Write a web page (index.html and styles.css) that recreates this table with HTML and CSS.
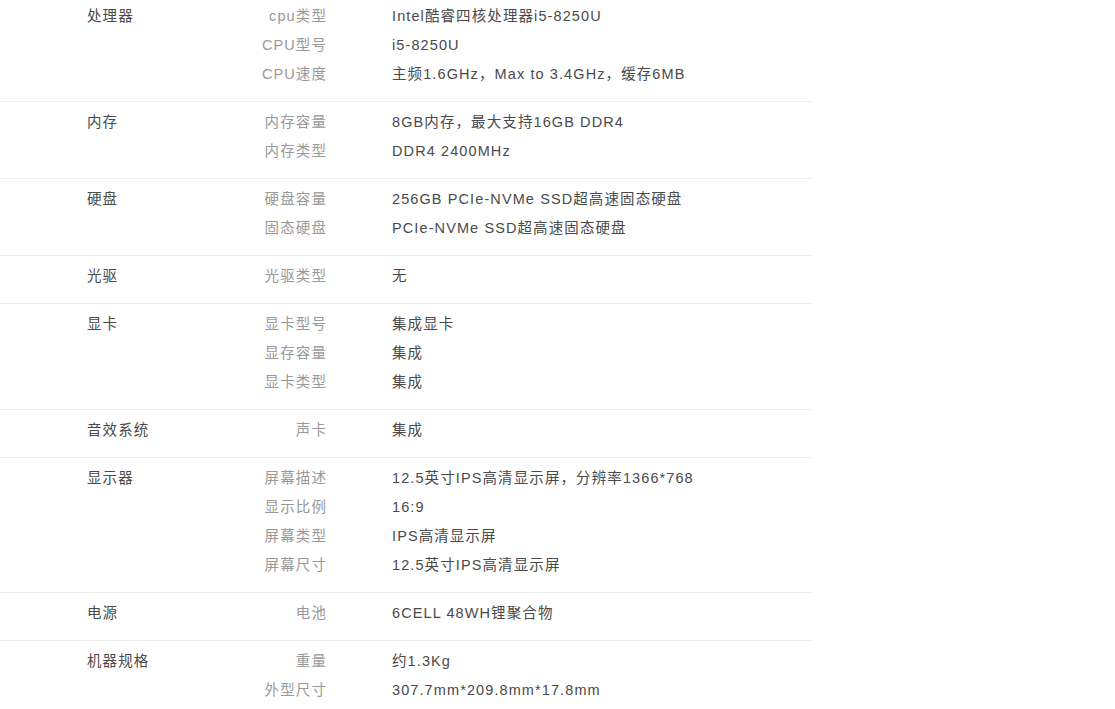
FILE: index.html
```html
<!DOCTYPE html>
<html lang="zh-CN">
<head>
<meta charset="utf-8">
<title>规格参数</title>
<link rel="stylesheet" href="styles.css">
</head>
<body>
<div class="specs">
  <section class="group">
    <div class="cat">处理器</div>
    <div class="items">
      <div class="row"><span class="label">cpu类型</span><span class="value">Intel酷睿四核处理器i5-8250U</span></div>
      <div class="row"><span class="label">CPU型号</span><span class="value">i5-8250U</span></div>
      <div class="row"><span class="label">CPU速度</span><span class="value">主频1.6GHz，Max to 3.4GHz，缓存6MB</span></div>
    </div>
  </section>
  <section class="group">
    <div class="cat">内存</div>
    <div class="items">
      <div class="row"><span class="label">内存容量</span><span class="value">8GB内存，最大支持16GB DDR4</span></div>
      <div class="row"><span class="label">内存类型</span><span class="value">DDR4 2400MHz</span></div>
    </div>
  </section>
  <section class="group">
    <div class="cat">硬盘</div>
    <div class="items">
      <div class="row"><span class="label">硬盘容量</span><span class="value">256GB PCIe-NVMe SSD超高速固态硬盘</span></div>
      <div class="row"><span class="label">固态硬盘</span><span class="value">PCIe-NVMe SSD超高速固态硬盘</span></div>
    </div>
  </section>
  <section class="group">
    <div class="cat">光驱</div>
    <div class="items">
      <div class="row"><span class="label">光驱类型</span><span class="value">无</span></div>
    </div>
  </section>
  <section class="group">
    <div class="cat">显卡</div>
    <div class="items">
      <div class="row"><span class="label">显卡型号</span><span class="value">集成显卡</span></div>
      <div class="row"><span class="label">显存容量</span><span class="value">集成</span></div>
      <div class="row"><span class="label">显卡类型</span><span class="value">集成</span></div>
    </div>
  </section>
  <section class="group">
    <div class="cat">音效系统</div>
    <div class="items">
      <div class="row"><span class="label">声卡</span><span class="value">集成</span></div>
    </div>
  </section>
  <section class="group">
    <div class="cat">显示器</div>
    <div class="items">
      <div class="row"><span class="label">屏幕描述</span><span class="value">12.5英寸IPS高清显示屏，分辨率1366*768</span></div>
      <div class="row"><span class="label">显示比例</span><span class="value">16:9</span></div>
      <div class="row"><span class="label">屏幕类型</span><span class="value">IPS高清显示屏</span></div>
      <div class="row"><span class="label">屏幕尺寸</span><span class="value">12.5英寸IPS高清显示屏</span></div>
    </div>
  </section>
  <section class="group">
    <div class="cat">电源</div>
    <div class="items">
      <div class="row"><span class="label">电池</span><span class="value">6CELL 48WH锂聚合物</span></div>
    </div>
  </section>
  <section class="group">
    <div class="cat">机器规格</div>
    <div class="items">
      <div class="row"><span class="label">重量</span><span class="value">约1.3Kg</span></div>
      <div class="row"><span class="label">外型尺寸</span><span class="value">307.7mm*209.8mm*17.8mm</span></div>
    </div>
  </section>
</div>
</body>
</html>
```
FILE: styles.css
```css
html, body {
  margin: 0;
  padding: 0;
  background: #fff;
}
body {
  font-family: "Liberation Sans", Arial, "Noto Sans CJK SC", sans-serif;
  font-size: 14.5px;
  color: #4a4a4a;
  overflow: hidden;
}
.specs {
  width: 813px;
  margin-top: -4px;
}
.group {
  display: flex;
  padding: 6px 0 12px 87px;
  border-bottom: 1px solid #eeeeee;
}
.cat {
  width: 120px;
  line-height: 29px;
  letter-spacing: 1.1px;
  color: #4a4a4a;
}
.items {
  display: flex;
  flex-direction: column;
}
.row {
  display: flex;
  line-height: 29px;
  letter-spacing: 1.1px;
}
.label {
  width: 120px;
  text-align: right;
  color: #999;
}
.value {
  margin-left: 65px;
  color: #4a4a4a;
  white-space: nowrap;
}
```
